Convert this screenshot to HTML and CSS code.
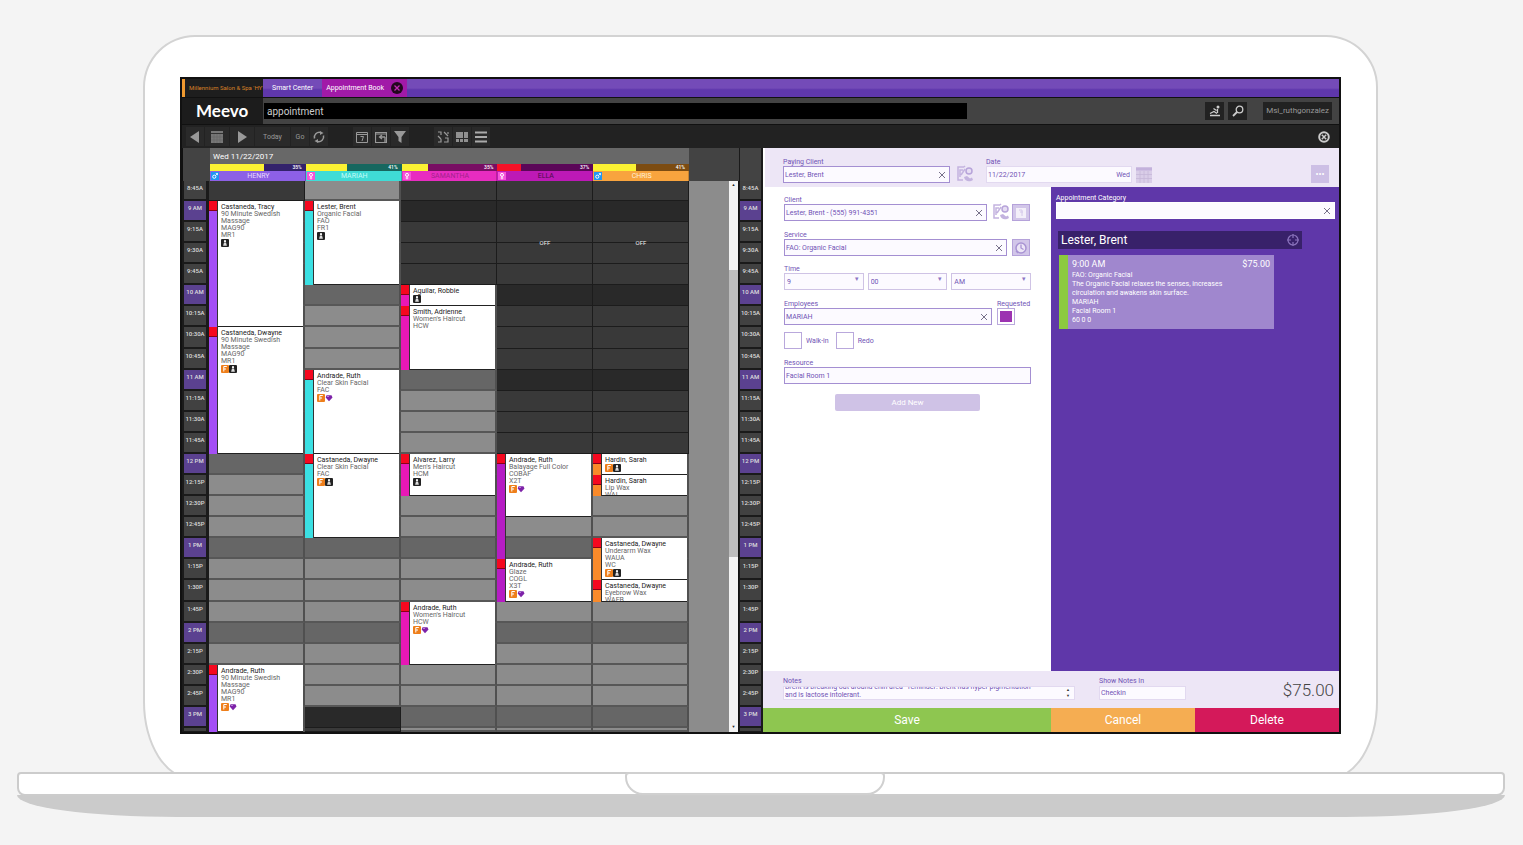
FILE: index.html
```html
<!DOCTYPE html>
<html lang="en">
<head>
<meta charset="utf-8">
<title>Meevo Appointment Book</title>
<link rel="stylesheet" href="styles.css">
</head>
<body>
<svg class="sprite" aria-hidden="true">
  <symbol id="i-person" viewBox="0 0 8 8"><rect width="8" height="8" rx="1" fill="#222"/><circle cx="4" cy="2.2" r="1.1" fill="#fff"/><path d="M3 3.5h2l.9 3.2H2.100z" fill="#ddd"/></symbol>
  <symbol id="i-form" viewBox="0 0 8 8"><rect width="8" height="8" rx="1" fill="#ee7f1b"/><path d="M2.800 6.500v-5h3M2.800 4h2.200" stroke="#fff" fill="none"/></symbol>
  <symbol id="i-gem" viewBox="0 0 8 8"><path d="M1.500 1.200h5L7.500 3.500 4 7.200.700 3.500z" fill="#7d22a8"/><path d="M2 2.500h2" stroke="#b780d6"/></symbol>
  <symbol id="i-male" viewBox="0 0 8 8"><rect width="8" height="8" fill="#2196f3"/><circle cx="3.300" cy="4.700" r="1.600" fill="none" stroke="#fff"/><path d="M4.500 3.500l2-2M4.800 1.500h1.700v1.700" fill="none" stroke="#fff" stroke-width=".8"/></symbol>
  <symbol id="i-female" viewBox="0 0 8 8"><rect width="8" height="8" fill="#f553d9"/><circle cx="4" cy="2.900" r="1.500" fill="none" stroke="#fff"/><path d="M4 4.400v3M2.700 6h2.600" stroke="#fff" stroke-width=".8"/></symbol>
  <symbol id="i-x" viewBox="0 0 8 8"><path d="M1 1l6 6M7 1L1 7" stroke="currentColor" fill="none"/></symbol>
  <symbol id="i-contact" viewBox="0 0 18 18"><path d="M8 2H2v13h5M8 2l1-1M4 12V5h3M5 10l4-6" fill="none" stroke="#c3b3df" stroke-width="1.500"/><circle cx="13" cy="6" r="3" fill="#e6ddf3" stroke="#b7a4da" stroke-width="1.500"/><path d="M8 12c1 5 6 5 9 3l-1-2.500-2 1-3-2.500z" fill="#c3b3df"/></symbol>
  <symbol id="i-cal" viewBox="0 0 16 16"><rect width="16" height="16" fill="#d9cde8"/><path d="M0 2h16" stroke="#c3b1dc" stroke-width="3"/><path d="M0 7.500h16M0 11.500h16M4 4v12M8 4v12M12 4v12" stroke="#c6b8d8" stroke-width=".8"/></symbol>
</svg>

<main class="laptop">
  <div class="lid">
    <div class="screen">
      <nav class="tabs">
        <a class="tab tab-site" href="#site">Millennium Salon &amp; Spa 'HY'</a>
        <a class="tab" href="#smart">Smart Center</a>
        <a class="tab tab-active" href="#book">Appointment Book
          <svg class="ico-12" viewBox="0 0 12 12"><circle cx="6" cy="6" r="6" fill="#22071f"/><path d="M3.500 3.500l5 5M8.500 3.500l-5 5" stroke="#c22bb6" stroke-width="1.300"/></svg></a>
      </nav>

      <header class="bar">
        <div class="logo">Meevo</div>
        <input class="search" type="text" value="appointment" aria-label="Search">
        <div class="bar-tools">
          <button class="sq" type="button" aria-label="Clock in"><svg class="ico-12" viewBox="0 0 12 12"><circle cx="9" cy="2" r="1.500" fill="#ccc"/><path d="M8.500 4v4M4.500 3.500l3 2M1 8.500l4-2 3 2M1 10.500h10" stroke="#ccc" stroke-width="1.300" fill="none"/></svg></button>
          <button class="sq" type="button" aria-label="Find"><svg class="ico-12" viewBox="0 0 12 12"><circle cx="7.500" cy="4.500" r="3.300" fill="none" stroke="#ccc" stroke-width="1.300"/><path d="M5 7l-4 4" stroke="#ccc" stroke-width="1.800"/></svg></button>
          <button class="user" type="button">Msi_ruthgonzalez</button>
        </div>
      </header>

      <div class="toolbar">
        <button type="button" aria-label="Previous"><svg class="ico-12" viewBox="0 0 12 12"><path d="M10 0v12L1 6z" fill="#999"/></svg></button>
        <button class="wide" type="button" aria-label="Pick date"><svg class="ico-12" viewBox="0 0 12 12"><path d="M0 0h12v12H0z" fill="#777"/><path d="M0 2.500h12" stroke="#333"/><path d="M0 6h12M0 9h12M3 3v9M6 3v9M9 3v9" stroke="#656565" stroke-width=".6"/></svg></button>
        <button class="wide" type="button" aria-label="Next"><svg class="ico-12" viewBox="0 0 12 12"><path d="M2 0v12l9-6z" fill="#999"/></svg></button>
        <button class="today" type="button">Today</button>
        <button type="button">Go</button>
        <button class="group-end" type="button" aria-label="Refresh"><svg class="ico-12" viewBox="0 0 12 12"><path d="M1.500 7.500a5 5 0 0 1 6-6M10.500 4.500a5 5 0 0 1-6 6" fill="none" stroke="#999" stroke-width="1.500"/><path d="M7 0l3.500 2L7 4zM5 8l-3.500 2L5 12z" fill="#999"/></svg></button>
        <button type="button" aria-label="Day"><svg class="ico-12" viewBox="0 0 12 12"><path d="M.500 1.500h11v10H.500zM.500 3.500h11" fill="none" stroke="#999"/><path d="M4.500 5.500h3L6 10" fill="none" stroke="#999"/></svg></button>
        <button type="button" aria-label="Reschedule"><svg class="ico-12" viewBox="0 0 12 12"><path d="M.500 1.500h11v10H.500zM.500 3h11" fill="none" stroke="#999" stroke-width="1.200"/><path d="M10 6H5M7 4L4.500 6 7 8M10 6v5" fill="none" stroke="#999" stroke-width="1.300"/></svg></button>
        <button class="group-end" type="button" aria-label="Filter"><svg class="ico-12" viewBox="0 0 12 12"><path d="M0 0h12L7.500 6v6l-3-2V6z" fill="#999"/></svg></button>
        <button type="button" aria-label="Swap"><svg class="ico-12" viewBox="0 0 12 12"><path d="M1 1h3v3M1 5l3 3M1 11h3V8M7 1l4 4M7 11h4V7H8M11 1v2" fill="none" stroke="#999" stroke-width="1.200"/></svg></button>
        <button type="button" aria-label="Layout"><svg class="ico-12" viewBox="0 0 12 12"><path d="M0 1h7v6H0zM8 1h4v6H8zM0 8h3v3H0zM4 8h3v3H4zM8 8h4v3H8z" fill="#909090"/></svg></button>
        <button type="button" aria-label="List"><svg class="ico-12" viewBox="0 0 12 12"><path d="M0 1.500h12M0 6h12M0 10.500h12" stroke="#aaa" stroke-width="1.800"/></svg></button>
        <button class="close" type="button" aria-label="Close"><svg class="ico-12" viewBox="0 0 12 12"><circle cx="6" cy="6" r="4.800" fill="none" stroke="#ccc" stroke-width="2"/><path d="M3.800 3.800l4.400 4.400M8.200 3.800L3.800 8.200" stroke="#ccc" stroke-width="1.500"/></svg></button>
      </div>

      <div class="work">
        <section class="calendar" aria-label="Appointment book">
          <div class="cal-head" id="cal-head"><div class="date">Wed 11/22/2017</div></div>
          <div class="cal-body" id="cal-body">
            <div class="scroll"><span class="arrow">▲</span><span class="thumb"></span><span class="arrow arrow-down">▼</span></div>
          </div>
        </section>

        <aside class="gutter"><div class="gutter-head"></div><div class="gutter-body" id="gutter"></div></aside>

        <form class="panel">
          <div class="panel-head">
            <div class="field paying"><label for="paying">Paying Client</label>
              <div class="box"><input id="paying" type="text" value="Lester, Brent"><button type="button" aria-label="Clear"><svg class="ico-8"><use href="#i-x"/></svg></button></div></div>
            <svg class="ico-18"><use href="#i-contact"/></svg>
            <div class="field date-field"><label for="date">Date</label>
              <div class="box box-soft"><input id="date" type="text" value="11/22/2017"><span class="dow">Wed</span></div></div>
            <svg class="ico-16"><use href="#i-cal"/></svg>
            <button class="more" type="button" aria-label="More">•••</button>
          </div>

          <div class="form">
            <div class="row">
              <div class="field"><label for="client">Client</label>
                <div class="box"><input id="client" type="text" value="Lester, Brent - (555) 991-4351"><button type="button" aria-label="Clear"><svg class="ico-8"><use href="#i-x"/></svg></button></div></div>
              <svg class="ico-18"><use href="#i-contact"/></svg>
              <button class="icon-btn" type="button" aria-label="History"><svg class="ico-16" viewBox="0 0 16 16"><path d="M3 3h10v10H3z" fill="#f3eff9"/><path d="M6 5h3v6M7 7h3" stroke="#d4c8ea" fill="none"/></svg></button>
            </div>
            <div class="row">
              <div class="field"><label for="service">Service</label>
                <div class="box"><input id="service" type="text" value="FAO: Organic Facial"><button type="button" aria-label="Clear"><svg class="ico-8"><use href="#i-x"/></svg></button></div></div>
              <button class="icon-btn" type="button" aria-label="Duration"><svg class="ico-16" viewBox="0 0 16 16"><circle cx="8" cy="8" r="5" fill="#ece5f6" stroke="#a893d3" stroke-width="1.500"/><path d="M8 4.500V8l2.500 1.500M5 13l-2-2" fill="none" stroke="#a893d3" stroke-width="1.300"/></svg></button>
            </div>
            <div class="field time-field"><label for="hour">Time</label>
              <div class="times">
                <div class="pick"><select id="hour"><option>9</option></select></div>
                <div class="pick"><select aria-label="Minutes"><option>00</option></select></div>
                <div class="pick"><select aria-label="AM or PM"><option>AM</option></select></div>
              </div></div>
            <div class="row">
              <div class="field"><label for="employee">Employees</label>
                <div class="box"><input id="employee" type="text" value="MARIAH"><button type="button" aria-label="Clear"><svg class="ico-8"><use href="#i-x"/></svg></button></div></div>
              <div class="field requested"><label for="requested">Requested</label><input id="requested" type="checkbox" checked></div>
            </div>
            <div class="checks">
              <input id="walkin" type="checkbox"><label for="walkin">Walk-in</label>
              <input id="redo" type="checkbox"><label for="redo">Redo</label>
            </div>
            <div class="field"><label for="resource">Resource</label>
              <div class="box"><input id="resource" type="text" value="Facial Room 1"></div></div>
            <button class="add" type="button">Add New</button>
          </div>

          <div class="summary">
            <div class="field light"><label for="category">Appointment Category</label>
              <div class="box"><input id="category" type="text"><button type="button" aria-label="Clear"><svg class="ico-8"><use href="#i-x"/></svg></button></div></div>
            <h2 class="client">Lester, Brent
              <svg class="ico-12" viewBox="0 0 12 12"><circle cx="6" cy="6" r="5" fill="none" stroke="#8b74bd" stroke-width="1.200"/><path d="M6 0v4M6 8v4M0 6h4M8 6h4" stroke="#8b74bd" stroke-width="1.200"/></svg></h2>
            <article class="card">
              <div class="card-top"><span>9:00 AM</span><span>$75.00</span></div>
              <p>FAO: Organic Facial</p>
              <p class="desc">The Organic Facial relaxes the senses, increases circulation and awakens skin surface.</p>
              <p>MARIAH</p>
              <p>Facial Room 1</p>
              <p>60 0 0</p>
            </article>
          </div>

          <div class="panel-foot">
            <div class="field notes"><label for="notes">Notes</label>
              <div class="box box-soft"><textarea id="notes">Brent is breaking out around chin area - reminder: Brent has hyper pigmentation
and is lactose intolerant.</textarea><span class="spin"><i>▲</i><i>▼</i></span></div></div>
            <div class="field show"><label for="show">Show Notes In</label>
              <div class="box box-soft"><input id="show" type="text" value="Checkin"></div></div>
            <output class="total">$75.00</output>
          </div>

          <div class="actions">
            <button class="save" type="button">Save</button>
            <button class="cancel" type="button">Cancel</button>
            <button class="delete" type="button">Delete</button>
          </div>
        </form>
      </div>
    </div>
  </div>
  <div class="base"><div class="notch"></div></div>
  <div class="foot"></div>
</main>
<script src="app.js"></script>
</body>
</html>
```
FILE: styles.css
```css
* { box-sizing: border-box; }
body { margin: 0; background: #f4f4f4; font: 7px/8px Roboto, "Liberation Sans", sans-serif; color: #222; }
button, input, select, textarea { font: inherit; color: inherit; margin: 0; padding: 0; border: 0; border-radius: 0; background: none; }
input, select, textarea { min-width: 0; outline: 0; }
p, h2 { margin: 0; }
svg { display: block; flex: none; }
.sprite { position: absolute; width: 0; height: 0; }
.ico-8 { width: 8px; height: 8px; }
.ico-12 { width: 12px; height: 12px; }
.ico-16 { width: 16px; height: 16px; }
.ico-18 { width: 18px; height: 18px; }

/* laptop */
.laptop { padding: 35px 18px 28px 17px; }
.lid { margin: 0 127px 0 126px; padding: 40px 35px 44px; background: #fff; border: 2px solid #d3d3d3; border-radius: 52px 52px 50px 50px / 52px 52px 78px 78px; }
.base { position: relative; margin-top: -8px; height: 24px; background: #fff; border: 2px solid #ccc; border-radius: 4px 4px 8px 8px; }
.notch { width: 260px; height: 23px; margin: -2px auto 0; border: 2px solid #d0d0d0; border-radius: 4px 4px 18px 18px; transform: translateX(-6px); }
.foot { height: 22px; margin-top: -1px; background: #cbcbcb; border-radius: 0 0 160px 160px / 0 0 22px 22px; }
.screen { border: 2px solid #111; background: #111; }

/* tabs */
.tabs { display: flex; height: 18px; background: linear-gradient(#744bb8 50%, #5f37ac 60%); }
.tab { display: flex; align-items: center; gap: 7px; padding: 0 9px; color: #fff; text-decoration: none; }
.tab-site { width: 81px; padding: 0 0 0 4px; overflow: hidden; white-space: nowrap; background: #1e1e1e; color: #d98026; font-size: 6px; border-left: 3px solid #f09a30; }
.tab-active { padding: 0 4px; background: #a11aa8; }

/* top bar */
.bar { display: flex; align-items: center; height: 26px; margin-top: 1px; background: #434343; }
.logo { width: 81px; height: 26px; padding-left: 14px; background: #1c1c1c; color: #fff; font: 700 17px/26px Lato, sans-serif; }
.search { flex: 0 1 703px; height: 16px; margin-left: 1px; padding-left: 3px; background: #000; color: #ccc; font-size: 10px; }
.bar-tools { display: flex; gap: 4px; margin-left: auto; padding-right: 7px; }
.sq { display: grid; place-items: center; width: 19px; height: 18px; background: #222; }
.user { height: 18px; margin-left: 12px; padding: 0 3px; background: #222; color: #999; font-size: 8px; }
.toolbar { display: flex; align-items: center; gap: 1px; height: 24px; padding: 0 6px 0 4px; background: #222; border-top: 1px solid #111; }
.toolbar button { display: grid; place-items: center; width: 18px; height: 19px; background: #2a2a2a; color: #999; }
.toolbar .wide { width: 24px; }
.toolbar .today { width: 35px; }
.toolbar .group-end { margin-right: 24px; }
.toolbar .close { margin-left: auto; background: none; }

/* calendar */
.work { display: grid; grid-template-columns: 557fr 24px 576fr; min-height: 584px; }
.calendar { display: flex; flex-direction: column; min-width: 0; }
.cal-head, .cal-body { display: grid; grid-template-columns: 27px repeat(5, 96fr) 40fr 10px; }
.cal-head { grid-template-rows: 16px 7px 10px; background: #434343; border-left: 1px solid #111; }
.date { grid-column: 2 / 7; padding: 5px 3px 0; background: #686868; color: #fff; font-size: 8px; }
.load { grid-row: 2; display: flex; color: #fff; font-size: 5px; line-height: 7px; text-align: right; }
.load b { font-weight: 500; flex: 1; padding-right: 4px; }
.person { grid-row: 3; display: flex; align-items: center; gap: 1px; padding-left: 1px; border-right: 1px solid #0003; line-height: 10px; }
.person span { flex: 1; padding-right: 8px; text-align: center; }
.henry { background: #8d60e6; color: #e6dcff; }
.mariah { background: #3fdcd6; color: #c5fbf8; }
.samantha { background: #e82cc0; color: #a3228c; }
.ella { background: #bd19b6; color: #4c0c4c; }
.chris { background: #f8a43e; color: #fff0d8; }
.load.henry { background: #33226b; color: #fff; }
.load.mariah { background: #17675f; color: #fff; }
.load.samantha { background: #780e63; color: #fff; }
.load.ella { background: #5b0758; color: #fff; }
.load.chris { background: #7c4c12; color: #fff; }
.fill { background: #fbf233; }
.fill.over { background: #f51228; }
.cal-body { flex: 1; background: #8c8c8c; }
.cal-body, .gutter-body { grid-template-rows: 20px repeat(25, minmax(21px, 1fr)) 4px; }
.time { margin: 0 3px 2px 2px; padding-top: 3px; background: #414141; color: #ddd; font-size: 6px; font-weight: 500; text-align: center; overflow: hidden; contain: size; }
.time.hour { background: #5b4190; }
.rail { grid-column: 1; grid-row: 1 / -1; background: #1a1a1a; }
.cell { background: #8c8c8c; border-bottom: 2px solid #575757; border-right: 2px solid #505050; }
.cell.hour { background: #666; }
.cell.off { background: #393939; border-width: 0 1px 1px 0; border-color: #1c1c1c; }
.cell.off.hour { background: #292929; }
.off-label { place-self: center; color: #eee; font-size: 6px; }
.appt { display: flex; contain: size; margin-right: 2px; }
.stripe { width: 9px; flex: none; border-right: 1px solid #333; }
.stripe::before { content: ""; display: block; height: 9px; background: #f5081f; border-bottom: 1px solid #8a0016; }
.stripe.violet { background: #a44ff5; }
.stripe.aqua { background: #3be0e3; }
.stripe.pink { background: #e818b6; }
.stripe.plum { background: #b61cc4; }
.stripe.orange { background: #f98a2a; }
.slip { flex: 1; min-width: 0; overflow: hidden; padding: 3px 0 0 3px; background: #fff; border-bottom: 1px solid #222; line-height: 7px; white-space: nowrap; color: #666; }
.slip strong { display: block; font-weight: 400; color: #222; }
.slip div { display: flex; }
.scroll { grid-column: 8; grid-row: 1 / -1; display: flex; flex-direction: column; background: #f3f3f3; border-right: 1px solid #111; }
.thumb { flex: 0 0 52%; margin-top: 80px; background: #bdbdbd; }
.arrow { height: 9px; font-size: 4px; text-align: center; }
.arrow-down { margin-top: auto; }
.gutter { display: flex; flex-direction: column; background: #1a1a1a; }
.gutter-head { height: 33px; margin: 0 2px 0 1px; background: #434343; }
.gutter-body { display: grid; flex: 1; }
.gutter .time { margin: 0 2px 2px 1px; }

/* booking form */
.panel { display: grid; grid-template-columns: 1fr 1fr; grid-template-rows: auto 1fr auto auto; background: #fff; color: #7153b5; min-width: 0; }
.panel-head { grid-column: 1 / -1; display: flex; align-items: flex-end; padding: 10px 10px 4px 18px; background: #ede6f6; border-left: 2px solid #fff; }
.panel-head .ico-18 { margin-left: 6px; }
.field { display: flex; flex-direction: column; min-width: 0; }
.row > .field { flex: 1; }
.panel-head .paying { flex: 0 1 167px; }
.panel-head .date-field { flex: 0 1 146px; margin: 0 4px 0 12px; }
.box { display: flex; align-items: center; height: 17px; border: 1px solid #a48fd2; background: #fcfaff; }
.box-soft { border-color: #e2d9f0; }
.box input { flex: 1; height: 15px; padding-left: 1px; }
.box button { display: grid; place-items: center; width: 14px; height: 15px; color: #77718a; }
.dow { padding-right: 1px; }
.more { width: 18px; height: 18px; margin-left: auto; background: #cdbfe5; color: #fff; font-size: 9px; }
.form { display: flex; flex-direction: column; gap: 10px; padding: 9px 20px 20px 21px; }
.row { display: flex; align-items: flex-end; gap: 5px; }
.row .ico-18 { margin-right: -3px; }
.icon-btn { display: grid; place-items: center; width: 18px; height: 17px; background: #d2c6e9; border: 1px solid #b5a2da; margin-right: 1px; }
.time-field { margin-top: -1px; }
.times { display: grid; grid-template-columns: repeat(3, 1fr); gap: 4px; }
.pick { position: relative; height: 17px; border: 1px solid #cfc3e5; background: #fcfaff; }
.pick::after { content: "▾"; position: absolute; right: 4px; top: 1px; font-size: 7px; color: #8e76c4; pointer-events: none; }
.pick select { width: 100%; height: 15px; padding-left: 2px; appearance: none; }
.row > .requested { flex: 0 0 34px; }
input[type="checkbox"] { appearance: none; width: 18px; height: 17px; border: 1px solid #b9a8dc; background: #fff; }
input[type="checkbox"]:checked { padding: 2px; background: #9c33b1 content-box; }
.checks { display: flex; align-items: center; margin-top: -3px; }
.checks label { margin: 0 7px 0 4px; }
.add { align-self: center; width: 145px; height: 17px; border-radius: 2px; background: #cfc2e6; color: #fff; font-size: 8px; }

.summary { padding: 7px 4px 10px 5px; background: #5f37a9; color: #fff; }
.light .box { border-color: #fff; }
.client { display: flex; align-items: center; justify-content: space-between; height: 18px; margin: 12px 33px 6px 2px; padding: 0 3px 0 3px; background: #38216a; font-size: 12px; font-weight: 400; }
.card { margin: 0 61px 0 3px; padding: 4px 4px 4px 4px; border-left: 9px solid #8cca3f; background: #a087ce; line-height: 9px; }
.card-top { display: flex; justify-content: space-between; margin-bottom: 2px; font-size: 9px; line-height: 10px; }
.desc { max-width: 170px; }

.panel-foot { grid-column: 1 / -1; display: flex; align-items: flex-start; gap: 24px; padding: 6px 5px 5px 20px; background: #ede6f6; }
.panel-foot .box { height: 14px; margin-top: 1px; }
.panel-foot input { height: 12px; }
.panel-foot .notes { flex: 0 1 292px; }
.notes textarea { flex: 1; height: 12px; padding: 0 1px; line-height: 8px; resize: none; overflow: hidden; }
.spin { display: grid; width: 12px; font-size: 4px; line-height: 6px; text-align: center; }
.spin i { font-style: normal; color: #333; }
.panel-foot .show { flex: 0 1 87px; }
.total { margin-left: auto; font-size: 17px; font-weight: 300; line-height: 26px; color: #444; }
.actions { grid-column: 1 / -1; display: grid; grid-template-columns: 2fr 1fr 1fr; }
.actions button { height: 24px; color: #fff; font-size: 12px; }
.save { background: #8ec650; }
.actions .cancel { background: #f5ad52; }
.actions .delete { background: #d4195a; }
```
FILE: app.js
```js
const people = [
  { id: 'henry', sex: 'male', load: '35%', fill: 56, open: 1, close: 27 },
  { id: 'mariah', sex: 'female', load: '41%', fill: 43, open: 0, close: 25 },
  { id: 'samantha', sex: 'female', load: '35%', fill: 28, open: 5, close: 27 },
  { id: 'ella', sex: 'female', load: '37%', fill: 25, over: true, open: 13, close: 27 },
  { id: 'chris', sex: 'male', load: '41%', fill: 45, open: 13, close: 27 }
];

/* column, first quarter hour, length, stripe, text lines, badges, stripe length */
const appointments = [
  [0, 1, 6, 'violet', ['Castaneda, Tracy', '90 Minute Swedish', 'Massage', 'MAG90', 'MR1'], ['person']],
  [0, 7, 6, 'violet', ['Castaneda, Dwayne', '90 Minute Swedish', 'Massage', 'MAG90', 'MR1'], ['form', 'person']],
  [0, 23, 4, 'violet', ['Andrade, Ruth', '90 Minute Swedish', 'Massage', 'MAG90', 'MR1'], ['form', 'gem']],
  [1, 1, 4, 'aqua', ['Lester, Brent', 'Organic Facial', 'FAO', 'FR1'], ['person']],
  [1, 9, 4, 'aqua', ['Andrade, Ruth', 'Clear Skin Facial', 'FAC'], ['form', 'gem']],
  [1, 13, 4, 'aqua', ['Castaneda, Dwayne', 'Clear Skin Facial', 'FAC'], ['form', 'person']],
  [2, 5, 1, 'pink', ['Aguilar, Robbie'], ['person']],
  [2, 6, 3, 'pink', ['Smith, Adrienne', "Women's Haircut", 'HCW'], []],
  [2, 13, 2, 'pink', ['Alvarez, Larry', "Men's Haircut", 'HCM'], ['person']],
  [2, 20, 3, 'pink', ['Andrade, Ruth', "Women's Haircut", 'HCW'], ['form', 'gem']],
  [3, 13, 3, 'plum', ['Andrade, Ruth', 'Balayage Full Color', 'COBAF', 'X2T'], ['form', 'gem'], 5],
  [3, 18, 2, 'plum', ['Andrade, Ruth', 'Glaze', 'COGL', 'X3T'], ['form', 'gem']],
  [4, 13, 1, 'orange', ['Hardin, Sarah'], ['form', 'person']],
  [4, 14, 1, 'orange', ['Hardin, Sarah', 'Lip Wax', 'WAL'], []],
  [4, 17, 2, 'orange', ['Castaneda, Dwayne', 'Underarm Wax', 'WAUA', 'WC'], ['form', 'person']],
  [4, 19, 1, 'orange', ['Castaneda, Dwayne', 'Eyebrow Wax', 'WAEB'], []]
];

const ROWS = 27;
const icon = name => `<svg class="ico-8"><use href="#i-${name}"/></svg>`;
const isHour = row => row % 4 === 1;

function timeLabel(row) {
  const minutes = 8 * 60 + 45 + row * 15;
  const h = Math.floor(minutes / 60), m = minutes % 60, h12 = (h + 11) % 12 + 1;
  if (m === 0) return `${h12} ${h < 12 ? 'AM' : 'PM'}`;
  return `${h12}:${m}${h < 12 ? 'A' : 'P'}`;
}

function place(parent, className, column, row, span, html = '') {
  const el = document.createElement('div');
  el.className = className;
  el.style.gridArea = `${row + 1} / ${column} / span ${span} / auto`;
  el.innerHTML = html;
  parent.append(el);
  return el;
}

const head = document.getElementById('cal-head');
const body = document.getElementById('cal-body');
const gutter = document.getElementById('gutter');

people.forEach((p, i) => {
  place(head, `load ${p.id}`, i + 2, 1, 1, `<span class="fill${p.over ? ' over' : ''}" style="width:${p.fill}%"></span><b>${p.load}</b>`);
  place(head, `person ${p.id}`, i + 2, 2, 1, `${icon(p.sex)}<span>${p.id.toUpperCase()}</span>`);
});

place(body, 'rail', 1, 0, ROWS);
for (let row = 0; row < ROWS; row++) {
  const hour = isHour(row) ? ' hour' : '';
  const label = row < ROWS - 1 ? timeLabel(row) : '';
  place(body, `time${hour}`, 1, row, 1, label);
  place(gutter, `time${hour}`, 1, row, 1, label);
  people.forEach((p, i) => {
    const off = row < p.open || row >= p.close ? ' off' : '';
    place(body, `cell${hour}${off}`, i + 2, row, 1);
  });
}
place(body, 'off-label', 5, 1, 4, 'OFF');
place(body, 'off-label', 6, 1, 4, 'OFF');

appointments.forEach(([col, row, span, tone, lines, badges, stripe]) => {
  if (stripe) place(body, 'appt', col + 2, row, stripe, `<div class="stripe ${tone}"></div>`);
  const [name, ...rest] = lines;
  place(body, 'appt', col + 2, row, span,
    `<div class="stripe ${tone}"></div><div class="slip"><strong>${name}</strong>${rest.join('<br>')}<div>${badges.map(icon).join('')}</div></div>`);
});

const notes = document.getElementById('notes');
notes.scrollTop = 5;
```
